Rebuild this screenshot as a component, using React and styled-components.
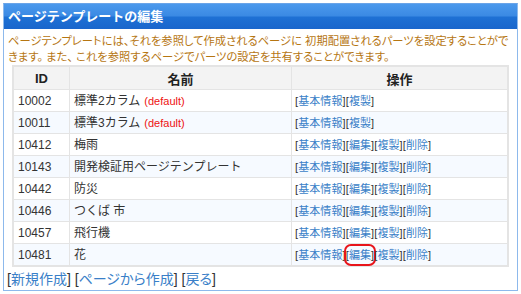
import React from "react";
import styled, { createGlobalStyle } from "styled-components";

const GlobalStyle = createGlobalStyle`
  body {
    margin: 0;
    background: #ffffff;
    font-family: "Liberation Sans", "Noto Sans CJK JP", sans-serif;
  }
`;

const Panel = styled.div`
  margin: 3px;
  width: 515px;
  height: 288px;
  box-sizing: border-box;
  border: 1px solid #8db9ec;
  border-top-color: #6aa4e8;
  background: #fff;
  overflow: hidden;
`;

const Title = styled.div`
  height: 25px;
  line-height: 25px;
  padding-left: 4px;
  color: #fff;
  font-weight: bold;
  font-size: 13px;
  background: linear-gradient(#4b99ec 0%, #3b8ae4 46%, #1e70d4 54%, #1966cc 100%);
`;

const Desc = styled.p`
  margin: 0;
  padding: 4px 4px 0 4px;
  color: #b67612;
  font-size: 11.3px;
  line-height: 16px;
  white-space: nowrap;
  font-feature-settings: "palt";
`;

const Table = styled.table`
  margin-left: 8px;
  width: 497px;
  border-collapse: collapse;
  border: 2px solid #e4e4e4;
  font-size: 12px;
  color: #333;
`;

const Th = styled.th`
  height: 22px;
  padding: 0;
  background: #f3f3f3;
  border: 1px solid #e4e4e4;
  font-size: 13px;
  font-weight: bold;
  color: #222;
  width: ${(p) => p.w}px;
`;

const Tr = styled.tr`
  background: ${(p) => (p.alt ? "#f6faff" : "#ffffff")};
`;

const Td = styled.td`
  height: 21px;
  padding: 0 0 0 ${(p) => p.pad ?? 4}px;
  line-height: 16px;
  border: 1px solid #e4e4e4;
  white-space: nowrap;
`;

const Default = styled.span`
  color: #ee1111;
  font-size: 11px;
  margin-left: 4px;
`;

const Ops = styled.span`
  color: #333;
  font-size: 11px;
  letter-spacing: 0.1px;
`;

const Link = styled.a`
  color: #3a7fc8;
  text-decoration: none;
`;

const Marked = styled.span`
  border-radius: 5px;
  box-shadow: 0 0 0 2px #e8141a;
  padding: 3px 0;
`;

const Footer = styled.div`
  padding: 3px 2px 0 3px;
  font-size: 14px;
  line-height: 18px;
  color: #333;
  font-feature-settings: "palt";
`;

const rows = [
  { id: "10002", name: "標準2カラム", def: true, full: false },
  { id: "10011", name: "標準3カラム", def: true, full: false },
  { id: "10412", name: "梅雨", full: true },
  { id: "10143", name: "開発検証用ページテンプレート", full: true },
  { id: "10442", name: "防災", full: true },
  { id: "10446", name: "つくば 市", full: true },
  { id: "10457", name: "飛行機", full: true },
  { id: "10481", name: "花", full: true, mark: true },
];

const Op = ({ label }) => (
  <>
    [<Link href="#">{label}</Link>]
  </>
);

export default function App() {
  return (
    <>
      <GlobalStyle />
      <Panel>
        <Title>ページテンプレートの編集</Title>
        <Desc>
          ページテンプレートには、それを参照して作成されるページに 初期配置されるパーツを設定することがで
          <br />
          きます。 また、 これを参照するページでパーツの設定を共有することができます。
        </Desc>
        <Table>
          <thead>
            <tr>
              <Th w={55}>ID</Th>
              <Th w={221}>名前</Th>
              <Th>操作</Th>
            </tr>
          </thead>
          <tbody>
            {rows.map((r, i) => (
              <Tr key={r.id} alt={i % 2 === 1}>
                <Td>{r.id}</Td>
                <Td>
                  {r.name}
                  {r.def && <Default>(default)</Default>}
                </Td>
                <Td pad={3}>
                  <Ops>
                    <Op label="基本情報" />
                    {r.full &&
                      (r.mark ? (
                        <Marked>
                          <Op label="編集" />
                        </Marked>
                      ) : (
                        <Op label="編集" />
                      ))}
                    <Op label="複製" />
                    {r.full && <Op label="削除" />}
                  </Ops>
                </Td>
              </Tr>
            ))}
          </tbody>
        </Table>
        <Footer>
          <Op label="新規作成" /> <Op label="ページから作成" /> <Op label="戻る" />
        </Footer>
      </Panel>
    </>
  );
}
